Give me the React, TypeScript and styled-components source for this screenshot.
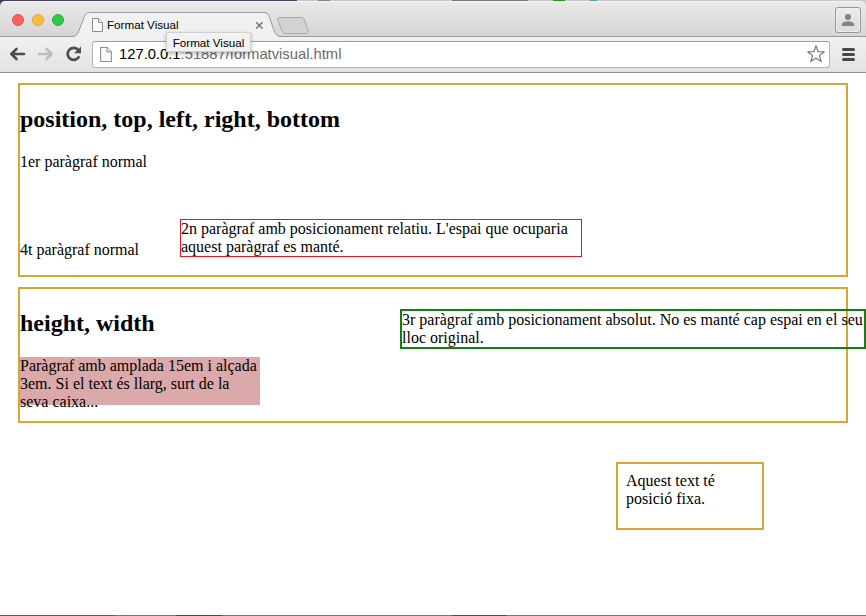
import React from 'react';
import styled, { createGlobalStyle } from 'styled-components';

const GlobalStyle = createGlobalStyle`
  * { box-sizing: border-box; }
  body { margin: 0; overflow: hidden; background: #fff; }
`;

const Window = styled.div`
  display: flex;
  flex-direction: column;
  width: 866px;
  height: 616px;
  background: #fff;
  color: #000;
  overflow: hidden;
`;

const DesktopEdge = styled.div`
  display: flex;
  height: 1px;
  flex: none;
`;

const EdgePiece = styled.span<{ $width?: number; $color: string }>`
  ${({ $width }) => ($width ? `width: ${$width}px;` : 'flex: 1;')}
  height: 1px;
  background: ${({ $color }) => $color};
`;

const TitleBar = styled.header`
  display: flex;
  height: 36px;
  flex: none;
  background: linear-gradient(#f5f5f5 0, #e9e9e9 2px, #d5d5d5 35px);
  border-radius: 5px 5px 0 0;
  box-shadow: inset 0 -1px #999;
`;

const TitleBackdrop = styled.div`
  background: linear-gradient(90deg, #493c68 0 297px, #ccc 297px);
`;

const Lights = styled.div`
  display: flex;
  gap: 8px;
  width: 72px;
  padding: 13px 0 0 12px;
`;

const Light = styled.span<{ $fill: string; $edge: string }>`
  width: 12px;
  height: 12px;
  border-radius: 50%;
  background: ${({ $fill }) => $fill};
  border: 1px solid ${({ $edge }) => $edge};
`;

const Tab = styled.div`
  position: relative;
  display: flex;
  align-items: center;
  width: 204px;
  height: 36px;
  padding: 12px 12px 0 20px;
  font: 11.65px/14px 'Liberation Sans', Arial, sans-serif;
`;

const TabShape = styled.svg`
  position: absolute;
  inset: 0;
`;

const TabLabel = styled.span`
  position: relative;
  flex: 1;
  margin-left: 4px;
  white-space: nowrap;
`;

const Glyph = styled.svg`
  position: relative;
  flex: none;
  display: block;
`;

const NewTab = styled.svg`
  margin-top: 15px;
`;

const ProfileButton = styled.div`
  width: 26px;
  height: 26px;
  margin: 6px 5px 0 auto;
  padding: 5px 5px;
  border: 1px solid #999;
  border-radius: 3px;
  background: linear-gradient(#ececec, #dcdcdc);
  box-shadow: inset 0 0 0 1px #eee;
`;

const Toolbar = styled.nav`
  display: flex;
  align-items: center;
  height: 36px;
  flex: none;
  padding: 0 10px 1px 9px;
  background: linear-gradient(#f1f1f1, #e3e3e3);
  border-bottom: 1px solid #919191;
`;

const NavIcons = styled.div`
  display: flex;
  align-items: center;
  gap: 11px;
  width: 83px;
`;

const AddressBar = styled.div`
  position: relative;
  display: flex;
  align-items: center;
  width: 738px;
  height: 27px;
  padding: 0 4px 0 7px;
  border: 1px solid #b5b5b5;
  border-top-color: #9c9c9c;
  border-radius: 3px;
  background: #fff;
`;

const Url = styled.span`
  flex: 1;
  margin-left: 7px;
  color: #6b6b6b;
  font: 14.78px/20px 'Liberation Sans', Arial, sans-serif;
`;

const Host = styled.span`
  color: #000;
`;

const Tooltip = styled.div`
  position: absolute;
  left: 73px;
  top: -10px;
  width: 85px;
  height: 20px;
  text-align: center;
  font: 11.65px/19px 'Liberation Sans', Arial, sans-serif;
  background: #f2f2f2;
  border: 1px solid #d0d0d0;
  box-shadow: 0 2px 4px rgba(0, 0, 0, 0.28);
  white-space: nowrap;
`;

const MenuButton = styled.div`
  display: flex;
  flex-direction: column;
  gap: 2px;
  margin-left: auto;
  margin-right: 1px;
`;

const MenuBar = styled.span`
  width: 13px;
  height: 3px;
  border-radius: 1.5px;
  background: #484848;
`;

const Page = styled.main`
  flex: 1;
  padding: 10px 18px 0;
  font: 16px/18px 'Liberation Serif', 'Times New Roman', serif;
`;

const Section = styled.section<{ $height: number }>`
  position: relative;
  height: ${({ $height }) => $height}px;
  margin-bottom: 10px;
  border: 2px solid #daa531;
`;

const Heading = styled.h2`
  margin: 20px 0;
  font-size: 24px;
  line-height: 28px;
  font-weight: bold;
`;

const Paragraph = styled.p`
  margin: 16px 0;
`;

const RelativeParagraph = styled(Paragraph)`
  position: relative;
  top: 32px;
  left: 160px;
  width: 402px;
  border: 1px solid #f01020;
`;

const AbsoluteParagraph = styled.p`
  position: absolute;
  top: 20px;
  left: 380px;
  width: 466px;
  margin: 0;
  border: 2px solid #108010;
`;

const SizedParagraph = styled(Paragraph)`
  width: 15em;
  height: 3em;
  background: #dba9a9;
`;

const FixedNote = styled.aside`
  width: 148px;
  height: 68px;
  margin: 39px 0 0 598px;
  padding: 8px;
  border: 2px solid #daa531;
`;

const PageIcon = ({ width, height }: { width: number; height: number }) => (
  <Glyph width={width} height={height} viewBox="0 0 11 14" fill="#fafafa" stroke="#8c8c8c">
    <path d="M.5.5h6l4 4v9H.5z" />
    <path d="M6.5.5v4h4" />
  </Glyph>
);

export default function App() {
  return (
    <Window>
      <GlobalStyle />
      <DesktopEdge>
        <EdgePiece $width={297} $color="#493c68" />
        <EdgePiece $width={21} $color="#c8c8c8" />
        <EdgePiece $width={12} $color="#858585" />
        <EdgePiece $width={122} $color="#c8c8c8" />
        <EdgePiece $width={76} $color="#777" />
        <EdgePiece $width={25} $color="#c8c8c8" />
        <EdgePiece $width={12} $color="#269426" />
        <EdgePiece $width={25} $color="#c8c8c8" />
        <EdgePiece $width={7} $color="#5b9bbd" />
        <EdgePiece $color="#c8c8c8" />
      </DesktopEdge>
      <TitleBackdrop>
        <TitleBar>
          <Lights>
            <Light $fill="#fc605c" $edge="#e8524e" />
            <Light $fill="#fdbc40" $edge="#e5a436" />
            <Light $fill="#34c84a" $edge="#2aae3c" />
          </Lights>
          <Tab>
            <TabShape width="210" height="36" viewBox="0 0 210 36">
              <path
                d="M0 36C4 35.5 5.5 34 7 30L12 17C13.2 13.3 14.5 12 17.5 12H192C195 12 196.4 13.3 197.5 17L202 30C203.5 34 205 35.5 209 36Z"
                fill="#f1f1f1"
              />
              <path
                d="M0 35.5C4 35 5.5 33.5 7 29.5L12 16.5C13.2 12.8 14.5 11.5 17.5 11.5H192C195 11.5 196.4 12.8 197.5 16.5L202 29.5C203.5 33.5 205 35 209 35.5"
                fill="none"
                stroke="#999"
              />
            </TabShape>
            <PageIcon width={11} height={14} />
            <TabLabel>Format Visual</TabLabel>
            <Glyph width="9" height="9" viewBox="0 0 9 9" stroke="#777" strokeWidth="1.5">
              <path d="M1.2 1.2l6.3 6.3M7.5 1.2L1.2 7.5" />
            </Glyph>
          </Tab>
          <NewTab width="34" height="19" viewBox="0 0 34 19">
            <path
              d="M3.5 1.5H25Q27.5 1.5 28.5 4L32.3 14.5Q33 17.5 30.5 17.5H10Q7 17.5 6 14.5L1.7 4Q1 1.5 3.5 1.5Z"
              fill="#d2d2d2"
              stroke="#aaa"
            />
          </NewTab>
          <ProfileButton>
            <svg width="14" height="14" viewBox="0 0 14 14" fill="#858585" display="block">
              <circle cx="7" cy="4" r="3.1" />
              <path d="M.8 13V11.4C1.3 9.2 4.5 8.3 7 8.3S12.7 9.2 13.2 11.4V13Z" />
            </svg>
          </ProfileButton>
        </TitleBar>
      </TitleBackdrop>
      <Toolbar>
        <NavIcons>
          <Glyph width="17" height="14" viewBox="0 0 17 14" fill="none" stroke="#4d4d4d" strokeWidth="2.6" strokeLinecap="round" strokeLinejoin="round">
            <path d="M15 7H2.8M7.5 2L2.3 7L7.5 12" />
          </Glyph>
          <Glyph width="17" height="14" viewBox="0 0 17 14" fill="none" stroke="#bdbdbd" strokeWidth="2.6" strokeLinecap="round" strokeLinejoin="round">
            <path d="M2 7H14.2M9.5 2L14.7 7L9.5 12" />
          </Glyph>
          <Glyph width="18" height="16" viewBox="0 0 18 16">
            <path d="M13.4 4.2A6 6 0 1 0 14.2 10.3" fill="none" stroke="#4d4d4d" strokeWidth="2.7" />
            <path d="M16 .5V7.2H9.2Z" fill="#4d4d4d" />
          </Glyph>
        </NavIcons>
        <AddressBar>
          <PageIcon width={12} height={15} />
          <Url>
            <Host>127.0.0.1</Host>:51887/formatvisual.html
          </Url>
          <Glyph width="18" height="18" viewBox="0 0 18 18" fill="#fff" stroke="#777" strokeWidth="1.2" strokeLinejoin="round">
            <path d="M9 .8L11.1 6.6L17.3 6.8L12.4 10.6L14.2 16.6L9 13.1L3.8 16.6L5.6 10.6L.7 6.8L6.9 6.6Z" />
          </Glyph>
          <Tooltip>Format Visual</Tooltip>
        </AddressBar>
        <MenuButton>
          <MenuBar />
          <MenuBar />
          <MenuBar />
        </MenuButton>
      </Toolbar>
      <Page>
        <Section $height={194}>
          <Heading>position, top, left, right, bottom</Heading>
          <Paragraph>1er paràgraf normal</Paragraph>
          <RelativeParagraph>
            2n paràgraf amb posicionament relatiu. L'espai que ocuparia aquest paràgraf es manté.
          </RelativeParagraph>
          <Paragraph>4t paràgraf normal</Paragraph>
        </Section>
        <Section $height={136}>
          <Heading>height, width</Heading>
          <SizedParagraph>
            Paràgraf amb amplada 15em i alçada 3em. Si el text és llarg, surt de la seva caixa...
          </SizedParagraph>
          <AbsoluteParagraph>
            3r paràgraf amb posicionament absolut. No es manté cap espai en el seu lloc original.
          </AbsoluteParagraph>
        </Section>
        <FixedNote>Aquest text té posició fixa.</FixedNote>
      </Page>
      <DesktopEdge>
        <EdgePiece $width={115} $color="#70505c" />
        <EdgePiece $width={61} $color="#777" />
        <EdgePiece $width={46} $color="#167016" />
        <EdgePiece $width={230} $color="#777" />
        <EdgePiece $width={54} $color="#505048" />
        <EdgePiece $color="#777" />
      </DesktopEdge>
    </Window>
  );
}
